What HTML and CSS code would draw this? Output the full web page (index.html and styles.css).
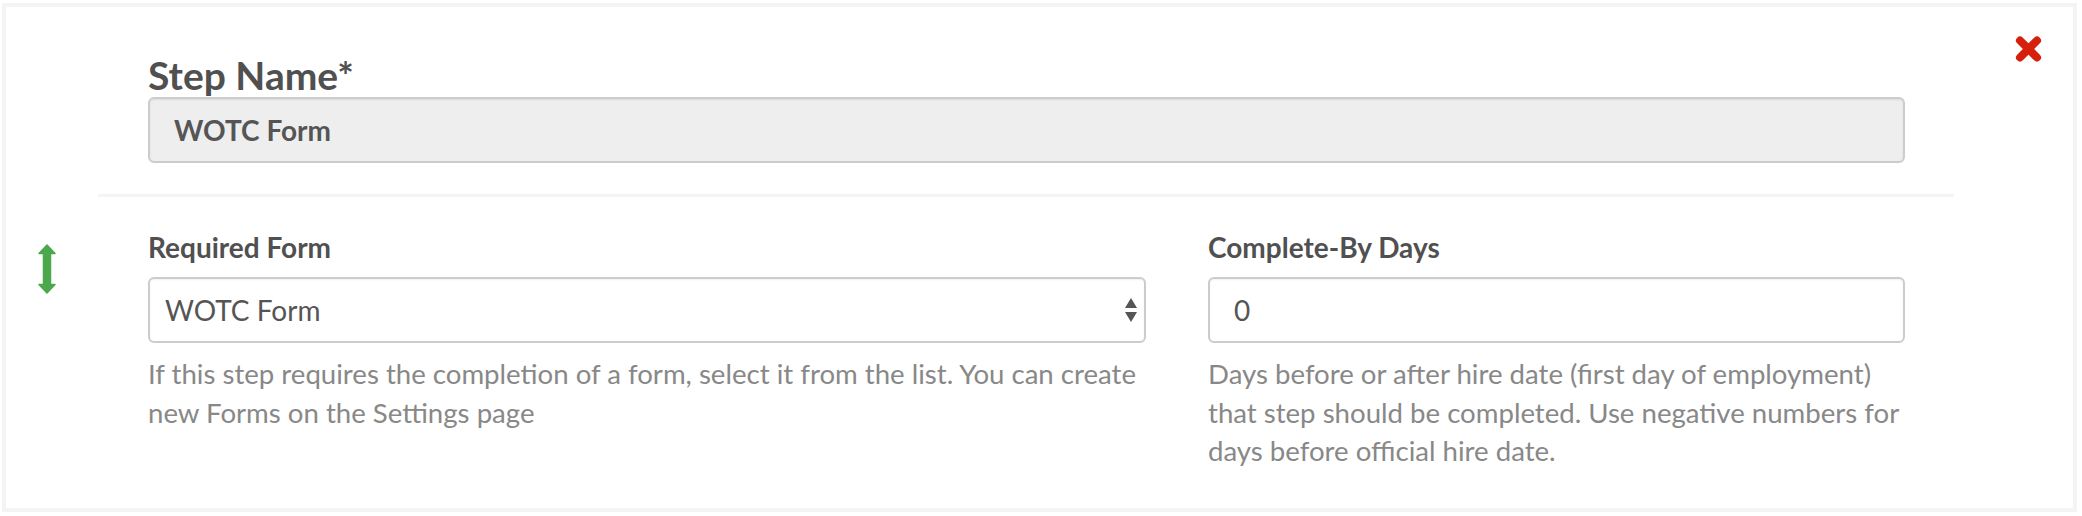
FILE: index.html
```html
<!DOCTYPE html>
<html lang="en">
<head>
<meta charset="utf-8">
<title>Step</title>
<link rel="stylesheet" href="styles.css">
</head>
<body>
<div class="card">
  <button class="close" type="button" aria-label="Remove step">
    <svg width="27" height="28" viewBox="0 0 27 28"><path d="M5 5.5 L22 22.5 M22 5.5 L5 22.5" stroke="#d6200c" stroke-width="8" stroke-linecap="round"/></svg>
  </button>
  <div class="name-block">
    <label class="title">Step Name*</label>
    <input class="name-input" type="text" value="WOTC Form" readonly>
  </div>
  <div class="divider"></div>
  <div class="row">
    <div class="handle">
      <svg width="18" height="50" viewBox="0 0 18 50"><path d="M9 1 L17 9.5 L12.5 9.5 L12.5 40.5 L17 40.5 L9 49 L1 40.5 L5.5 40.5 L5.5 9.5 L1 9.5 Z" fill="#4ba84b" stroke="#4ba84b" stroke-width="1.5" stroke-linejoin="round"/></svg>
    </div>
    <div class="col col-left">
      <label class="field-label">Required Form</label>
      <div class="select-wrap">
        <select class="field select">
          <option>WOTC Form</option>
        </select>
        <svg class="select-arrows" width="12" height="24" viewBox="0 0 12 24"><path d="M6 0 L12 10 L0 10 Z M0 14 L12 14 L6 24 Z" fill="#555"/></svg>
      </div>
      <p class="help">If this step requires the completion of a form, select it from the list. You can create new Forms on the Settings page</p>
    </div>
    <div class="col col-right">
      <label class="field-label">Complete-By Days</label>
      <input class="field num" type="text" value="0">
      <p class="help">Days before or after hire date (first day of employment) that step should be completed. Use negative numbers for days before official hire date.</p>
    </div>
  </div>
</div>
</body>
</html>
```

FILE: styles.css
```css
html, body {
  margin: 0;
  padding: 0;
  background: #ffffff;
}

body {
  font-family: Lato, "Open Sans", "Liberation Sans", sans-serif;
  color: #555555;
}

.card {
  position: relative;
  box-sizing: border-box;
  height: 509px;
  margin: 3px 5px 4px 2px;
  border: 4px solid #f4f4f4;
  background: #ffffff;
}

.close {
  position: absolute;
  top: 28px;
  right: 31px;
  padding: 0;
  margin: 0;
  border: 0;
  background: none;
  line-height: 0;
  cursor: pointer;
}

.name-block {
  padding: 46px 0 0 142px;
  width: 1757px;
}

.title {
  display: block;
  margin: 0;
  font-weight: 700;
  font-size: 39px;
  line-height: 44px;
  color: #505050;
}

.name-input {
  display: block;
  box-sizing: border-box;
  width: 1757px;
  height: 66px;
  margin: 0;
  padding: 0 24px;
  border: 2px solid #cccccc;
  border-radius: 6px;
  background: #eeeeee;
  box-shadow: inset 0 1px 2px rgba(0, 0, 0, 0.08);
  font-family: inherit;
  font-weight: 700;
  font-size: 28px;
  color: #555555;
  outline: none;
}

.divider {
  width: 1856px;
  height: 3px;
  margin: 31px 0 0 92px;
  background: #f4f4f4;
}

.row {
  display: flex;
  padding-top: 34px;
}

.handle {
  box-sizing: border-box;
  width: 142px;
  padding: 13px 0 0 32px;
  line-height: 0;
}

.col-left {
  width: 998px;
  margin-right: 62px;
}

.col-right {
  width: 697px;
}

.field-label {
  display: block;
  margin: 0 0 14px;
  font-weight: 700;
  font-size: 28px;
  line-height: 32px;
  color: #505050;
}

.field {
  display: block;
  box-sizing: border-box;
  width: 100%;
  height: 66px;
  margin: 0;
  border: 2px solid #cccccc;
  border-radius: 6px;
  background: #ffffff;
  box-shadow: inset 0 1px 2px rgba(0, 0, 0, 0.06);
  font-family: inherit;
  font-size: 28px;
  color: #555555;
  outline: none;
}

.select-wrap {
  position: relative;
}

.select {
  -webkit-appearance: none;
  appearance: none;
  padding: 0 40px 0 15px;
}

.select-arrows {
  position: absolute;
  top: 21px;
  right: 9px;
}

.num {
  padding: 0 24px;
}

.help {
  margin: 12px 0 0;
  font-size: 27.6px;
  line-height: 38.5px;
  color: #888888;
}
```
